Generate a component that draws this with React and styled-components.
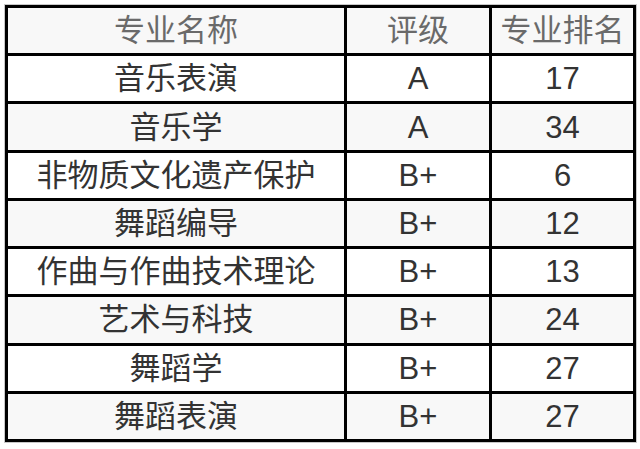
import styled, { createGlobalStyle } from "styled-components";

const GlobalStyle = createGlobalStyle`
  html, body {
    margin: 0;
    padding: 0;
    background: #ffffff;
  }
  body {
    font-family: "Liberation Sans", "Noto Sans CJK SC", sans-serif;
  }
`;

const Page = styled.div`
  width: 640px;
  height: 449px;
  padding: 5px;
  box-sizing: border-box;
`;

const Table = styled.div`
  display: grid;
  grid-template-columns: 336px 142px 141px;
  grid-template-rows: repeat(9, 1fr);
  gap: 3px;
  padding: 3px;
  width: 631px;
  height: 437px;
  box-sizing: border-box;
  background: #000;
  box-shadow: 0 0 0 1px #c8c8c8;
`;

const Row = styled.div`
  display: contents;
`;

const Cell = styled.div`
  display: flex;
  align-items: center;
  justify-content: center;
  background: ${(p) => (p.$shade ? "#f8f8f8" : "#ffffff")};
  color: ${(p) => (p.$head ? "#6a6a6a" : "#333333")};
  font-size: 31px;
  line-height: 1;
  white-space: nowrap;
`;

const rows = [
  ["音乐表演", "A", "17"],
  ["音乐学", "A", "34"],
  ["非物质文化遗产保护", "B+", "6"],
  ["舞蹈编导", "B+", "12"],
  ["作曲与作曲技术理论", "B+", "13"],
  ["艺术与科技", "B+", "24"],
  ["舞蹈学", "B+", "27"],
  ["舞蹈表演", "B+", "27"],
];

const App = () => {
  return (
    <Page>
      <GlobalStyle />
      <Table>
        <Row>
          <Cell $head $shade>专业名称</Cell>
          <Cell $head $shade>评级</Cell>
          <Cell $head $shade>专业排名</Cell>
        </Row>
        {rows.map((r, i) => (
          <Row key={i}>
            {r.map((v, j) => (
              <Cell key={j} $shade={i % 2 === 1}>
                {v}
              </Cell>
            ))}
          </Row>
        ))}
      </Table>
    </Page>
  );
};

export default App;
